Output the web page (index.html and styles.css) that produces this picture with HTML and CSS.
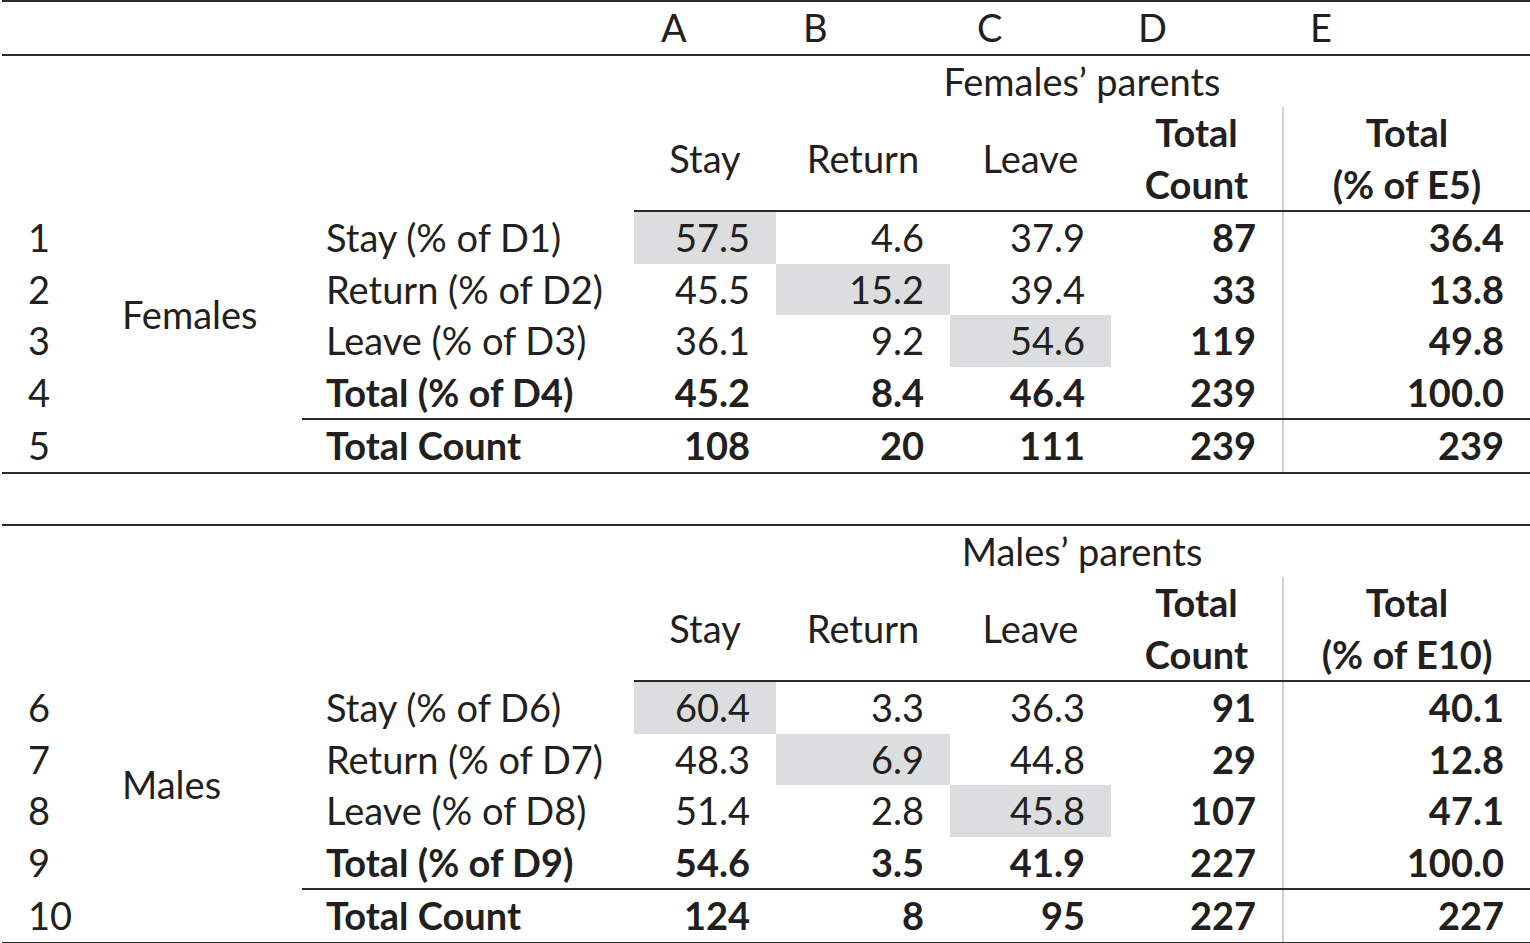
FILE: index.html
```html
<!DOCTYPE html>
<html>
<head>
	<meta charset="utf-8">
	<link rel="stylesheet" href="styles.css">
</head>
<body>
	<table class="grid">
		<colgroup>
			<col class="col-num"><col class="col-group"><col class="col-label">
			<col class="col-a"><col class="col-b"><col class="col-c"><col class="col-d"><col class="col-e">
		</colgroup>
		<tr class="letters">
			<td></td><td></td><td></td>
			<td>A</td><td>B</td><td>C</td><td>D</td><td>E</td>
		</tr>
		<tr class="parents">
			<td colspan="3"></td>
			<td colspan="5" class="parents-title">Females’ parents</td>
		</tr>
		<tr class="head">
			<td colspan="3" class="blank"></td>
			<td>Stay</td><td>Return</td><td>Leave</td>
			<td class="bold">Total<br>Count</td>
			<td class="bold sep">Total<br>(% of E5)</td>
		</tr>
		<tr class="row">
			<td class="num">1</td>
			<td class="group" rowspan="4">Females</td>
			<td class="label">Stay (% of D1)</td>
			<td class="val diag">57.5</td><td class="val">4.6</td><td class="val">37.9</td>
			<td class="val bold">87</td><td class="val bold sep">36.4</td>
		</tr>
		<tr class="row">
			<td class="num">2</td>
			<td class="label">Return (% of D2)</td>
			<td class="val">45.5</td><td class="val diag">15.2</td><td class="val">39.4</td>
			<td class="val bold">33</td><td class="val bold sep">13.8</td>
		</tr>
		<tr class="row">
			<td class="num">3</td>
			<td class="label">Leave (% of D3)</td>
			<td class="val">36.1</td><td class="val">9.2</td><td class="val diag">54.6</td>
			<td class="val bold">119</td><td class="val bold sep">49.8</td>
		</tr>
		<tr class="row total">
			<td class="num">4</td>
			<td class="label">Total (% of D4)</td>
			<td class="val">45.2</td><td class="val">8.4</td><td class="val">46.4</td>
			<td class="val">239</td><td class="val sep">100.0</td>
		</tr>
		<tr class="row count">
			<td class="num">5</td>
			<td></td>
			<td class="label">Total Count</td>
			<td class="val">108</td><td class="val">20</td><td class="val">111</td>
			<td class="val">239</td><td class="val sep">239</td>
		</tr>
	</table>

	<table class="grid second">
		<colgroup>
			<col class="col-num"><col class="col-group"><col class="col-label">
			<col class="col-a"><col class="col-b"><col class="col-c"><col class="col-d"><col class="col-e">
		</colgroup>
		<tr class="parents first">
			<td colspan="3"></td>
			<td colspan="5" class="parents-title">Males’ parents</td>
		</tr>
		<tr class="head">
			<td colspan="3" class="blank"></td>
			<td>Stay</td><td>Return</td><td>Leave</td>
			<td class="bold">Total<br>Count</td>
			<td class="bold sep">Total<br>(% of E10)</td>
		</tr>
		<tr class="row">
			<td class="num">6</td>
			<td class="group" rowspan="4">Males</td>
			<td class="label">Stay (% of D6)</td>
			<td class="val diag">60.4</td><td class="val">3.3</td><td class="val">36.3</td>
			<td class="val bold">91</td><td class="val bold sep">40.1</td>
		</tr>
		<tr class="row">
			<td class="num">7</td>
			<td class="label">Return (% of D7)</td>
			<td class="val">48.3</td><td class="val diag">6.9</td><td class="val">44.8</td>
			<td class="val bold">29</td><td class="val bold sep">12.8</td>
		</tr>
		<tr class="row">
			<td class="num">8</td>
			<td class="label">Leave (% of D8)</td>
			<td class="val">51.4</td><td class="val">2.8</td><td class="val diag">45.8</td>
			<td class="val bold">107</td><td class="val bold sep">47.1</td>
		</tr>
		<tr class="row total">
			<td class="num">9</td>
			<td class="label">Total (% of D9)</td>
			<td class="val">54.6</td><td class="val">3.5</td><td class="val">41.9</td>
			<td class="val">227</td><td class="val sep">100.0</td>
		</tr>
		<tr class="row count">
			<td class="num">10</td>
			<td></td>
			<td class="label">Total Count</td>
			<td class="val">124</td><td class="val">8</td><td class="val">95</td>
			<td class="val">227</td><td class="val sep">227</td>
		</tr>
	</table>
</body>
</html>
```

FILE: styles.css
```css
body{
	margin: 0;
	padding: 0 0 0 2px;
	background-color: white;
	color: #231f20;
	font-family: Lato, "Open Sans", sans-serif;
	font-size: 38px;
}

.grid{
	width: 1528px;
	table-layout: fixed;
	border-collapse: collapse;
	border-spacing: 0;
}

.second{
	margin-top: 50px;
}

.col-num{ width: 96px; }
.col-group{ width: 204px; }
.col-label{ width: 332px; }
.col-a{ width: 142px; }
.col-b{ width: 174px; }
.col-c{ width: 161px; }
.col-d{ width: 172px; }
.col-e{ width: 247px; }

td{
	padding: 0 26px;
	height: 51.5px;
	line-height: 51.5px;
	white-space: nowrap;
	vertical-align: middle;
}

.letters td{
	border-top: 2px solid #2b2b2b;
	border-bottom: 2px solid #2b2b2b;
	text-align: left;
	padding-left: 27px;
}

.parents.first td{
	border-top: 2px solid #2b2b2b;
}

.parents-title{
	text-align: center;
}

.head td{
	height: 103px;
	text-align: center;
	border-bottom: 2px solid #2b2b2b;
	padding: 0;
}

.head .blank{
	border-bottom: none;
}

.num{
	padding-left: 26px;
}

.group{
	padding-left: 24px;
	vertical-align: middle;
}

.label{
	padding-left: 24px;
}

.val{
	text-align: right;
}

.diag{
	background-color: #dcdddf;
}

.bold,
.total td,
.count td{
	font-weight: bold;
}

.total .num,
.count .num{
	font-weight: normal;
}

.total td{
	border-bottom: 2px solid #2b2b2b;
}

.total .num{
	border-bottom: none;
}

.count td{
	border-bottom: 2px solid #2b2b2b;
}

.sep{
	border-left: 2px solid #cfcfcf;
}
```
